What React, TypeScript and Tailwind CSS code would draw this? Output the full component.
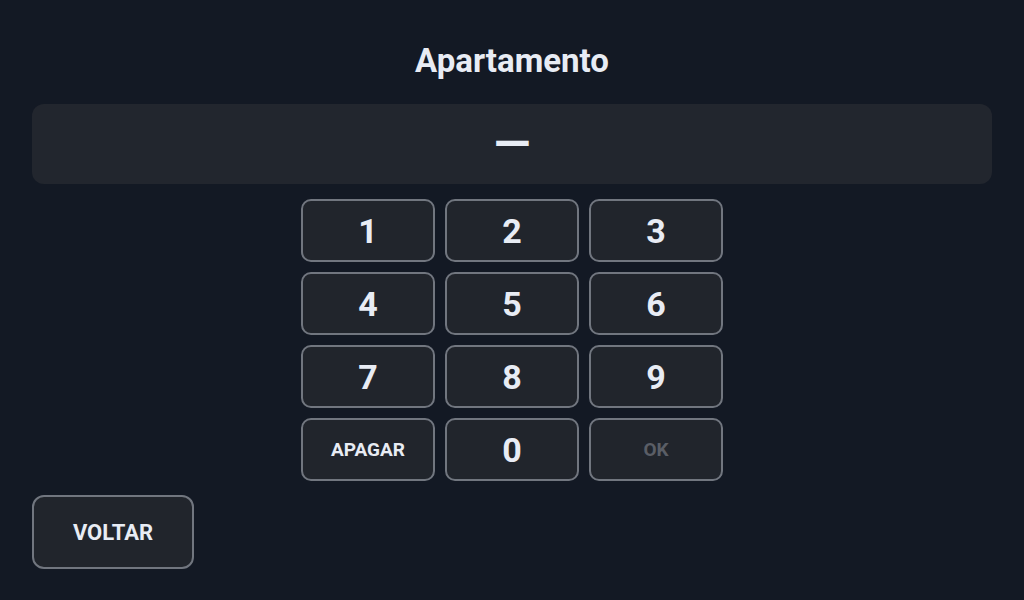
import React, { useState } from 'react';

const keys = ['1', '2', '3', '4', '5', '6', '7', '8', '9', 'APAGAR', '0', 'OK'];

const App: React.FC = () => {
  const [value, setValue] = useState<string>('');

  const press = (k: string) => {
    if (k === 'APAGAR') {
      setValue(v => v.slice(0, -1));
    } else if (k === 'OK') {
      // nothing to confirm yet
    } else {
      setValue(v => (v.length < 6 ? v + k : v));
    }
  };

  return (
    <div
      className="w-full h-[600px] bg-[#131924] text-[#e8ecf4] px-8 flex flex-col"
      style={{ fontFamily: 'Roboto, "Noto Sans", sans-serif' }}
    >
      <h1 className="pt-[41px] h-[80px] text-[33px] leading-[39px] font-bold text-center">Apartamento</h1>

      {/* Display */}
      <div className="mt-6 h-20 rounded-xl bg-[#22262e] flex items-center justify-center">
        <span className="text-[48px] font-bold leading-none">{value || '—'}</span>
      </div>

      {/* Keypad */}
      <div className="mt-[15px] mx-auto w-[422px] grid grid-cols-3 gap-[10px]">
        {keys.map(k => {
          const isWord = k === 'APAGAR' || k === 'OK';
          const disabled = k === 'OK' && value.length === 0;
          return (
            <button
              key={k}
              onClick={() => press(k)}
              disabled={disabled}
              className={`h-[63px] pt-[2px] rounded-[10px] border-2 border-[#71767f] bg-[#21252c] flex items-center justify-center font-bold ${
                isWord ? 'text-[19px]' : 'text-[34px]'
              } ${disabled ? 'text-[#5a5e66]' : 'text-[#e8ecf4]'}`}
            >
              {k}
            </button>
          );
        })}
      </div>

      <div className="mt-[14px]">
        <button className="w-[162px] h-[74px] rounded-xl border-2 border-[#71767f] bg-[#21252c] text-[22px] font-bold text-[#e8ecf4]">
          VOLTAR
        </button>
      </div>
    </div>
  );
};

export default App;
